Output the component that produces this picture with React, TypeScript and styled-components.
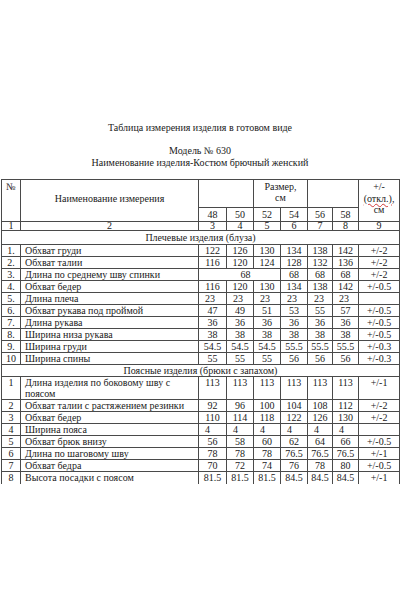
import React from "react";
import styled, { createGlobalStyle } from "styled-components";

const serif = `"Liberation Serif", "DejaVu Serif", "Times New Roman", serif`;

const GlobalStyle = createGlobalStyle`
  html, body {
    margin: 0;
    padding: 0;
    background: #ffffff;
  }
  body {
    font-family: ${serif};
    color: #1a1a1a;
  }
`;

type Item = {
  no: string;
  name: string;
  values: string[];
  tol: string;
  tall?: boolean;
  leftValues?: boolean;
  merged?: boolean;
};

const shoulder: Item[] = [
  { no: "1.", name: "Обхват груди", values: ["122", "126", "130", "134", "138", "142"], tol: "+/-2" },
  { no: "2.", name: "Обхват талии", values: ["116", "120", "124", "128", "132", "136"], tol: "+/-2" },
  { no: "3.", name: "Длина по среднему шву спинки", values: ["68", "68", "68", "68"], tol: "+/-2", merged: true },
  { no: "4.", name: "Обхват бедер", values: ["116", "120", "130", "134", "138", "142"], tol: "+/-0.5" },
  { no: "5.", name: "Длина плеча", values: ["23", "23", "23", "23", "23", "23"], tol: "", leftValues: true },
  { no: "6.", name: "Обхват рукава под проймой", values: ["47", "49", "51", "53", "55", "57"], tol: "+/-0.5" },
  { no: "7.", name: "Длина рукава", values: ["36", "36", "36", "36", "36", "36"], tol: "+/-0.5" },
  { no: "8.", name: "Ширина низа рукава", values: ["38", "38", "38", "38", "38", "38"], tol: "+/-0.5" },
  { no: "9.", name: "Ширина груди", values: ["54.5", "54.5", "54.5", "55.5", "55.5", "55.5"], tol: "+/-0.3" },
  { no: "10", name: "Ширина спины", values: ["55", "55", "55", "56", "56", "56"], tol: "+/-0.3" },
];

const waist: Item[] = [
  { no: "1", name: "Длина изделия по боковому шву с поясом", values: ["113", "113", "113", "113", "113", "113"], tol: "+/-1", tall: true },
  { no: "2", name: "Обхват талии с растяжением резинки", values: ["92", "96", "100", "104", "108", "112"], tol: "+/-2" },
  { no: "3", name: "Обхват бедер", values: ["110", "114", "118", "122", "126", "130"], tol: "+/-2" },
  { no: "4", name: "Ширина пояса", values: ["4", "4", "4", "4", "4", "4"], tol: "", leftValues: true },
  { no: "5", name: "Обхват брюк внизу", values: ["56", "58", "60", "62", "64", "66"], tol: "+/-0.5" },
  { no: "6", name: "Длина по шаговому шву", values: ["78", "78", "78", "76.5", "76.5", "76.5"], tol: "+/-1" },
  { no: "7", name: "Обхват бедра", values: ["70", "72", "74", "76", "78", "80"], tol: "+/-0.5" },
  { no: "8", name: "Высота посадки с поясом", values: ["81.5", "81.5", "81.5", "84.5", "84.5", "84.5"], tol: "+/-1" },
];

const colWidths = [19, 178, 28, 27, 27, 27, 25, 26, 41];

export default function App() {
  const renderRow = (item: Item, key: string) => (
    <BodyRow key={key} $h={item.tall ? 23 : 12}>
      <NumCell>{item.no}</NumCell>
      <NameCell>{item.name}</NameCell>
      {item.merged ? (
        <>
          <ValueCell colSpan={3} $shift={12}>{item.values[0]}</ValueCell>
          {item.values.slice(1).map((v, i) => (
            <ValueCell key={i}>{v}</ValueCell>
          ))}
        </>
      ) : (
        item.values.map((v, i) => (
          <ValueCell key={i} $left={item.leftValues}>{v}</ValueCell>
        ))
      )}
      <ValueCell>{item.tol}</ValueCell>
    </BodyRow>
  );

  return (
    <>
      <GlobalStyle />
      <Page>
        <Heading>
          <Line>Таблица измерения изделия в готовом виде</Line>
          <Line>&nbsp;</Line>
          <Line>Модель № 630</Line>
          <Line>Наименование изделия-Костюм брючный женский</Line>
        </Heading>
        <Table>
          <colgroup>
            {colWidths.map((w, i) => (
              <col key={i} style={{ width: w }} />
            ))}
          </colgroup>
          <tbody>
            <HeadRow $h={28}>
              <HeadCell rowSpan={2} $top>№</HeadCell>
              <HeadCell rowSpan={2} $pb={5}>Наименование измерения</HeadCell>
              <HeadCell colSpan={2} />
              <HeadCell colSpan={2} $top>
                Размер,
                <br />
                см
              </HeadCell>
              <HeadCell colSpan={2} />
              <TolHead rowSpan={2}>
                +/-
                <br />
                <Squiggle>(откл.)</Squiggle>,
                <br />
                см
              </TolHead>
            </HeadRow>
            <HeadRow $h={14}>
              {["48", "50", "52", "54", "56", "58"].map((s) => (
                <SizeCell key={s}>{s}</SizeCell>
              ))}
            </HeadRow>
            <IndexRow>
              {["1", "2", "3", "4", "5", "6", "7", "8", "9"].map((n) => (
                <IndexCell key={n}>{n}</IndexCell>
              ))}
            </IndexRow>
            <SectionRow $h={14}>
              <SectionCell colSpan={9}>Плечевые изделия (блуза)</SectionCell>
            </SectionRow>
            {shoulder.map((it, i) => renderRow(it, "s" + i))}
            <SectionRow $h={12}>
              <SectionCell colSpan={9}>Поясные изделия (брюки с запахом)</SectionCell>
            </SectionRow>
            {waist.map((it, i) => renderRow(it, "w" + i))}
          </tbody>
        </Table>
      </Page>
    </>
  );
}

const Page = styled.div`
  width: 400px;
  padding-top: 122px;
  box-sizing: border-box;
  font-family: ${serif};
`;

const Heading = styled.div`
  display: flex;
  flex-direction: column;
  align-items: center;
  font-family: ${serif};
  font-size: 10px;
  line-height: 11.5px;
  margin-bottom: 11px;
`;

const Line = styled.div`
  white-space: nowrap;
`;

const Table = styled.table`
  margin-left: 1px;
  width: 398px;
  table-layout: fixed;
  border-collapse: collapse;
  font-family: ${serif};
  font-size: 10px;
  color: #1a1a1a;

  tr:last-child td {
    border-bottom: none;
  }
`;

const Cell = styled.td`
  border: 1px solid #4a4a4a;
  padding: 0;
  text-align: center;
  vertical-align: top;
  white-space: nowrap;
  overflow: hidden;
  font-family: ${serif};
`;

const HeadRow = styled.tr<{ $h: number }>`
  height: ${(p) => p.$h}px;
`;

const HeadCell = styled(Cell)<{ $top?: boolean; $pb?: number }>`
  vertical-align: ${(p) => (p.$top ? "top" : "middle")};
  line-height: 11px;
  padding-top: ${(p) => (p.$top ? 1 : 0)}px;
  padding-bottom: ${(p) => p.$pb ?? 0}px;
`;

const TolHead = styled(Cell)`
  line-height: 11.5px;
  padding-top: 1px;
`;

const Squiggle = styled.span`
  text-decoration: underline wavy #d23a3a;
  text-decoration-thickness: 1px;
  text-underline-offset: 1px;
`;

const SizeCell = styled(Cell)`
  line-height: 13px;
`;

const IndexRow = styled.tr`
  height: 9px;
`;

const IndexCell = styled(Cell)`
  line-height: 8px;
`;

const SectionRow = styled.tr<{ $h: number }>`
  height: ${(p) => p.$h}px;
`;

const SectionCell = styled(Cell)`
  vertical-align: middle;
  line-height: 11px;
`;

const BodyRow = styled.tr<{ $h: number }>`
  height: ${(p) => p.$h}px;
`;

const NumCell = styled(Cell)`
  line-height: 11px;
`;

const NameCell = styled(Cell)`
  text-align: left;
  padding-left: 4px;
  line-height: 11px;
  white-space: normal;
`;

const ValueCell = styled(Cell)<{ $left?: boolean; $shift?: number }>`
  line-height: 11px;
  text-align: ${(p) => (p.$left ? "left" : "center")};
  padding-left: ${(p) => (p.$left ? 6 : p.$shift ?? 0)}px;
`;
